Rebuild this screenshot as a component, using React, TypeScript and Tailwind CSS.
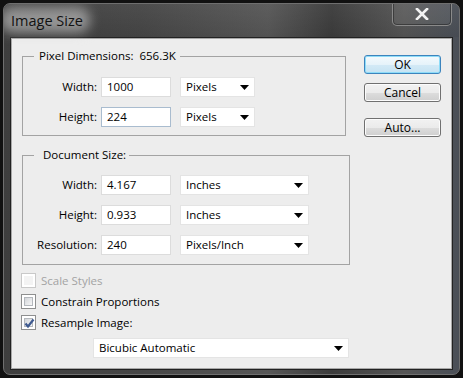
import React from "react";

const Arrow = () => (
  <svg width="9" height="5" viewBox="0 0 9 5" className="shrink-0">
    <polygon points="0,0 9,0 4.5,5" fill="#000" />
  </svg>
);

const Select = ({ text, className }: { text: string; className: string }) => (
  <div
    className={`h-[20px] flex items-center justify-between bg-white border border-[#e4e4e4] pl-[5px] pr-[5px] ${className}`}
  >
    <span>{text}</span>
    <Arrow />
  </div>
);

const Field = ({
  label,
  value,
  unit,
  selectClass,
  focused,
}: {
  label: string;
  value: string;
  unit: string;
  selectClass: string;
  focused?: boolean;
}) => (
  <div className="flex items-center h-[20px]">
    <span className="w-[74px] text-right">{label}</span>
    <div
      className={`ml-[4px] w-[70px] h-[20px] flex items-center bg-white pl-[5px] border ${
        focused ? "border-[#a9bccf]" : "border-[#dcdcdc]"
      }`}
    >
      {value}
    </div>
    <Select text={unit} className={`ml-[9px] ${selectClass}`} />
  </div>
);

const Checkbox = ({ label, checked, disabled }: { label: string; checked?: boolean; disabled?: boolean }) => (
  <div className="flex items-center h-[15px] -ml-[1px]">
    <div
      className={`w-[15px] h-[15px] border bg-white p-[2px] ${
        disabled ? "border-[#c9c9c9]" : "border-[#8e8f8f]"
      }`}
    >
      <div
        className={`relative w-full h-full ${
          disabled
            ? "bg-[#f3f3f3]"
            : "border border-[#b4b8bd] bg-gradient-to-br from-[#d3d6da] to-[#f7f7f7]"
        }`}
      >
        {checked && (
          <svg width="11" height="11" viewBox="0 0 11 11" className="absolute -left-[1px] -top-[1px]">
            <path d="M1.5 5.5 L4 8.5 L9.5 1.5" stroke="#3e5a90" strokeWidth="2.2" fill="none" />
          </svg>
        )}
      </div>
    </div>
    <span className={`ml-[5px] ${disabled ? "text-[#a3a3a3]" : "text-black"}`}>{label}</span>
  </div>
);

const btn =
  "h-[19px] w-[77px] rounded-[3px] border text-[12px] leading-none flex items-center justify-center text-black";

export default function App() {
  return (
    <div className="w-[463px] h-[378px] bg-[#111] p-[3px] font-['Open_Sans',sans-serif] text-[11.5px] text-black">
      <div className="h-full flex flex-col rounded-[7px] border border-[#6f6f6f] bg-[linear-gradient(90deg,#3e3e3e_0%,#464646_30%,#575757_58%,#3c3c3c_72%,#555_88%,#4a4f57_100%)] overflow-hidden">
        <div className="h-[33px] flex justify-between shrink-0 bg-[linear-gradient(180deg,rgba(255,255,255,0.04),rgba(0,0,0,0.05))]">
          <div className="self-center pl-[7px] pt-[1px] relative">
            <div className="absolute -left-[4px] -top-[2px] w-[90px] h-[26px] rounded-[12px] bg-[rgba(215,215,215,0.55)] blur-[6px]" />
            <span className="relative text-[14.5px] text-[#111]">Image Size</span>
          </div>
          <div className="mr-[7px] w-[60px] h-[23px] -mt-[1px] rounded-b-[5px] border border-[#8a8a8a] border-t-0 bg-[rgba(255,255,255,0.06)] shadow-[inset_0_0_0_1px_rgba(0,0,0,0.35)] flex items-center justify-center">
            <svg width="14" height="12" viewBox="0 0 14 12">
              <path d="M2 1 L12 11 M12 1 L2 11" stroke="#f2f2f2" strokeWidth="2.6" strokeLinecap="square" />
            </svg>
          </div>
        </div>

        <div className="flex-1 mx-[6px] mb-[4px] border border-[#222] bg-[#ededed] shadow-[inset_0_0_0_1px_#a8a8a8] flex pl-[11px] pr-[11px] pt-[17px]">
          <div className="flex flex-col">
            <div className="relative mt-[1px] w-[324px] h-[80px] border border-[#a3a3a3] pt-[20px] flex flex-col gap-[10px]">
              <div className="absolute left-[11px] -top-[9px] h-[16px] flex items-center bg-[#ededed] pl-[5px] pr-[4px]">
                <span>Pixel Dimensions:</span>
                <span className="ml-[6px]">656.3K</span>
              </div>
              <Field label="Width:" value="1000" unit="Pixels" selectClass="w-[75px]" />
              <Field label="Height:" value="224" unit="Pixels" selectClass="w-[75px]" focused />
            </div>

            <div className="relative mt-[19px] w-[328px] h-[110px] border border-[#a3a3a3] pt-[19px] flex flex-col gap-[10px]">
              <div className="absolute left-[11px] -top-[9px] h-[16px] flex items-center bg-[#ededed] pl-[9px] pr-[3px]">
                <span>Document Size:</span>
              </div>
              <Field label="Width:" value="4.167" unit="Inches" selectClass="w-[129px]" />
              <Field label="Height:" value="0.933" unit="Inches" selectClass="w-[129px]" />
              <Field label="Resolution:" value="240" unit="Pixels/Inch" selectClass="w-[129px]" />
            </div>

            <div className="mt-[8px] flex flex-col gap-[6px]">
              <Checkbox label="Scale Styles" disabled />
              <Checkbox label="Constrain Proportions" />
              <Checkbox label="Resample Image:" checked />
            </div>

            <Select text="Bicubic Automatic" className="mt-[8px] ml-[71px] w-[256px]" />
          </div>

          <div className="ml-auto flex flex-col w-[77px]">
            <button className={`${btn} border-[#3c84bd] bg-[linear-gradient(180deg,#f4fafd_0%,#e6f3fa_50%,#d3eaf6_51%,#c6e3f3_100%)] shadow-[inset_0_0_0_1px_#8edcf8]`}>
              OK
            </button>
            <button className={`${btn} mt-[9px] border-[#707070] bg-[linear-gradient(180deg,#f2f2f2_0%,#ebebeb_50%,#dddddd_51%,#cfcfcf_100%)] shadow-[inset_0_0_0_1px_#fcfcfc]`}>
              Cancel
            </button>
            <button className={`${btn} mt-[16px] border-[#707070] bg-[linear-gradient(180deg,#f2f2f2_0%,#ebebeb_50%,#dddddd_51%,#cfcfcf_100%)] shadow-[inset_0_0_0_1px_#fcfcfc]`}>
              Auto...
            </button>
          </div>
        </div>
      </div>
    </div>
  );
}
